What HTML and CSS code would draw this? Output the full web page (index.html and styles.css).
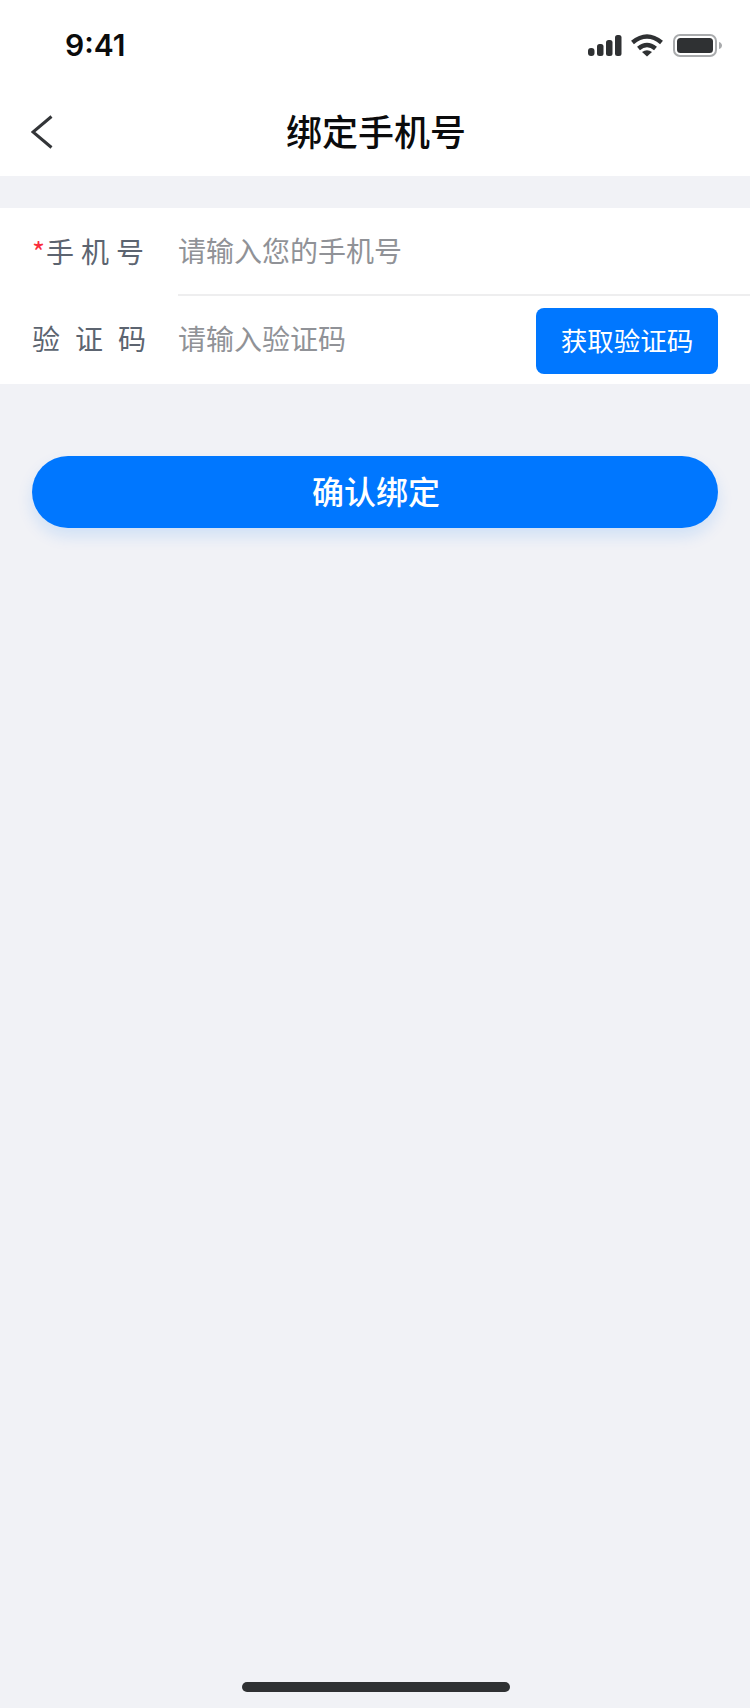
FILE: index.html
```html
<!DOCTYPE html>
<html lang="zh-CN">
<head>
    <meta charset="UTF-8">
    <meta name="viewport" content="width=device-width, initial-scale=1.0">
    <title>绑定手机号</title>
    <link rel="stylesheet" href="styles.css">
</head>
<body>
    <div class="page">
        <div class="status-bar">
            <span class="time">9:41</span>
            <div class="status-icons">
                <svg class="signal" width="34" height="22" viewBox="0 0 34 22">
                    <rect x="0" y="14" width="6.500" height="8" rx="3" fill="#2f3133"/>
                    <rect x="9" y="10" width="6.500" height="12" rx="2.500" fill="#2f3133"/>
                    <rect x="18" y="6" width="6.500" height="16" rx="2.500" fill="#2f3133"/>
                    <rect x="27" y="1" width="6.500" height="21" rx="2.500" fill="#2f3133"/>
                </svg>
                <svg class="wifi" width="32" height="23" viewBox="0 0 32 23">
                    <path d="M1.500 8.500Q16 -3.500 30.500 8.500" fill="none" stroke="#2f3133" stroke-width="4.500"/>
                    <path d="M7.500 14.500Q16 7.500 24.500 14.500" fill="none" stroke="#2f3133" stroke-width="4.500"/>
                    <path d="M16 22.500L11 18Q16 14.500 21 18Z" fill="#2f3133"/>
                </svg>
                <svg class="battery" width="49" height="23" viewBox="0 0 49 23">
                    <rect x="1" y="1" width="42" height="21" rx="6" fill="none" stroke="#a9abad" stroke-width="2"/>
                    <rect x="4" y="4" width="36" height="15" rx="3.500" fill="#2f3133"/>
                    <path d="M46 8C48 8.500 49 10 49 11.500C49 13 48 14.500 46 15Z" fill="#a9abad"/>
                </svg>
            </div>
        </div>

        <div class="nav-bar">
            <svg class="back" width="22" height="34" viewBox="0 0 22 34">
                <path d="M20.500 1.500L2 17L20.500 32.500" fill="none" stroke="#333538" stroke-width="3"/>
            </svg>
            <h1 class="nav-title">绑定手机号</h1>
        </div>

        <div class="form">
            <div class="row row-phone">
                <label class="label label-phone"><span class="required">*</span>手机号</label>
                <div class="field">
                    <span class="placeholder">请输入您的手机号</span>
                </div>
            </div>
            <div class="row row-code">
                <label class="label label-code">验证码</label>
                <div class="field">
                    <span class="placeholder">请输入验证码</span>
                    <button class="code-btn">获取验证码</button>
                </div>
            </div>
        </div>

        <button class="confirm-btn">确认绑定</button>

        <div class="home-indicator"></div>
    </div>
</body>
</html>
```

FILE: styles.css
```css
* {
    box-sizing: border-box;
}
body {
    margin: 0;
    background-color: #f1f2f6;
    font-family: "Noto Sans CJK SC", "Noto Sans", sans-serif;
}
.page {
    display: flex;
    flex-direction: column;
    height: 1708px;
    overflow: hidden;
}

/* status bar */
.status-bar {
    display: flex;
    align-items: center;
    justify-content: space-between;
    height: 88px;
    padding: 2px 28px 0 65px;
    background: #fff;
}
.time {
    font-family: Inter, "Liberation Sans", sans-serif;
    font-size: 30px;
    font-weight: 600;
    color: #0b0b0c;
}
.status-icons {
    display: flex;
    align-items: center;
    gap: 9px;
}
.battery {
    margin-left: 1px;
}

/* nav */
.nav-bar {
    display: flex;
    align-items: center;
    justify-content: center;
    position: relative;
    height: 88px;
    padding: 0 0 4px 2px;
    background: #fff;
}
.back {
    position: absolute;
    left: 31px;
    top: 27px;
}
.nav-title {
    margin: 0;
    font-size: 36px;
    font-weight: 500;
    color: #0b0b0c;
}

/* form */
.form {
    margin-top: 32px;
    background: #fff;
}
.row {
    display: flex;
    padding-left: 32px;
}
.label {
    display: flex;
    align-items: center;
    width: 146px;
    padding-bottom: 3px;
    font-size: 28px;
    color: #5c6470;
}
.label-phone {
    letter-spacing: 7px;
}
.label-code {
    letter-spacing: 15px;
    padding-bottom: 5px;
}
.required {
    width: 14px;
    letter-spacing: 0;
    color: #fa2d3c;
}
.field {
    flex: 1;
    display: flex;
    align-items: center;
    justify-content: space-between;
}
.row-phone .field {
    height: 88px;
    border-bottom: 2px solid #eeeeef;
}
.row-code .field {
    height: 88px;
    padding-right: 32px;
}
.placeholder {
    padding-bottom: 3px;
    font-size: 28px;
    color: #909297;
}
.row-code .placeholder {
    padding-bottom: 5px;
}
.code-btn {
    width: 182px;
    height: 66px;
    margin-top: 2px;
    padding: 0 0 3px;
    border: none;
    border-radius: 8px;
    background: #0077ff;
    font-family: inherit;
    font-size: 26.500px;
    color: #fff;
}

/* confirm */
.confirm-btn {
    height: 72px;
    margin: 72px 32px 0;
    padding: 0 0 4px 2px;
    border: none;
    border-radius: 36px;
    background: #0077ff;
    box-shadow: 0 8px 16px rgba(0, 119, 255, 0.14);
    font-family: inherit;
    font-size: 32px;
    font-weight: 500;
    color: #fff;
}

.home-indicator {
    width: 268px;
    height: 10px;
    margin: auto 240px 16px 242px;
    border-radius: 5px;
    background: #2f3133;
}
```
